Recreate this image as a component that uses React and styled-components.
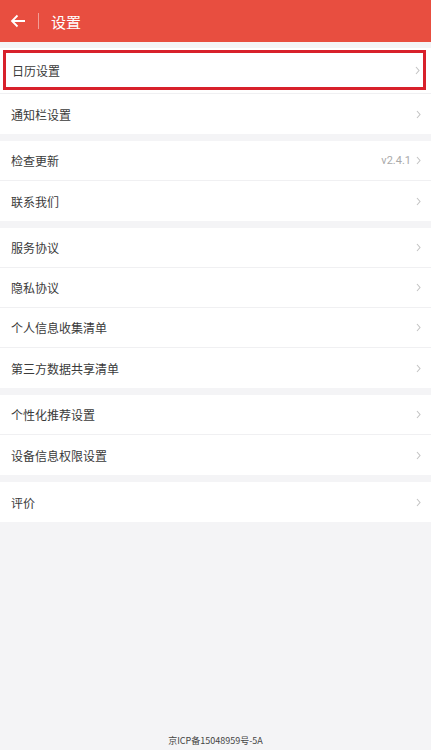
import React from 'react';
import styled, { createGlobalStyle } from 'styled-components';

const GlobalStyle = createGlobalStyle`
    body {
        margin: 0;
        background: #f4f4f6;
        font-family: "Noto Sans CJK SC", "Noto Sans", sans-serif;
    }
`;

const Page = styled.div`
    width: 431px;
    height: 750px;
    display: flex;
    flex-direction: column;
    background: #f4f4f6;
`;

const Header = styled.div`
    height: 42px;
    flex-shrink: 0;
    display: flex;
    align-items: center;
    background: #e84e40;
    color: #fff;
    padding-left: 10px;
`;

const BackButton = styled.div`
    width: 16px;
    height: 16px;
    display: flex;
    align-items: center;
`;

const HeaderDivider = styled.div`
    width: 1px;
    height: 16px;
    background: rgba(255, 255, 255, 0.45);
    margin: 0 12px 0 12px;
`;

const Title = styled.div`
    font-size: 15px;
    line-height: 1;
`;

const Group = styled.div`
    margin-top: ${(p) => p.$gap}px;
    background: #fff;
`;

const Row = styled.div`
    height: ${(p) => (p.$tall ? 46 : 40)}px;
    box-sizing: border-box;
    display: flex;
    align-items: center;
    padding: ${(p) => (p.$tall ? '2px 5px 3px 3px' : '0 10px 0 11px')};
    border-bottom: ${(p) => (p.$last ? 'none' : '1px solid #f0f0f2')};
`;

const Highlight = styled.div`
    flex: 1;
    height: 100%;
    box-sizing: border-box;
    border: 3px solid #d8212b;
    display: flex;
    align-items: center;
    padding: 0 3px 0 6px;
`;

const Label = styled.span`
    flex: 1;
    font-size: 12px;
    color: #3a3a3a;
`;

const Value = styled.span`
    font-size: 11px;
    color: #aaa;
    margin-right: 5px;
    font-family: "Roboto", "Noto Sans", sans-serif;
`;

const Footer = styled.div`
    margin-top: auto;
    padding-bottom: 3px;
    text-align: center;
    font-size: 9px;
    color: #444;
    line-height: 12px;
`;

const Chevron = () => (
    <svg width="5" height="9" viewBox="0 0 5 9">
        <path d="M1 1 L4 4.5 L1 8" fill="none" stroke="#c4c4c4" strokeWidth="1.1" />
    </svg>
);

const Item = ({ label, value, last }) => (
    <Row $last={last}>
        <Label>{label}</Label>
        {value && <Value>{value}</Value>}
        <Chevron />
    </Row>
);

const groups = [
    [{ label: '检查更新', value: 'v2.4.1' }, { label: '联系我们' }],
    [{ label: '服务协议' }, { label: '隐私协议' }, { label: '个人信息收集清单' }, { label: '第三方数据共享清单' }],
    [{ label: '个性化推荐设置' }, { label: '设备信息权限设置' }],
    [{ label: '评价' }],
];

const App = () => (
    <Page>
        <GlobalStyle />
        <Header>
            <BackButton>
                <svg width="16" height="14" viewBox="0 0 16 14">
                    <path d="M15 7 H2 M7.5 1.5 L2 7 L7.5 12.5" fill="none" stroke="#fff" strokeWidth="1.8" />
                </svg>
            </BackButton>
            <HeaderDivider />
            <Title>设置</Title>
        </Header>
        <Group $gap={6}>
            <Row $tall>
                <Highlight>
                    <Label>日历设置</Label>
                    <Chevron />
                </Highlight>
            </Row>
            <Item label="通知栏设置" last />
        </Group>
        {groups.map((g, i) => (
            <Group key={i} $gap={7}>
                {g.map((it, j) => (
                    <Item key={it.label} label={it.label} value={it.value} last={j === g.length - 1} />
                ))}
            </Group>
        ))}
        <Footer>京ICP备15048959号-5A</Footer>
    </Page>
);

export default App;
